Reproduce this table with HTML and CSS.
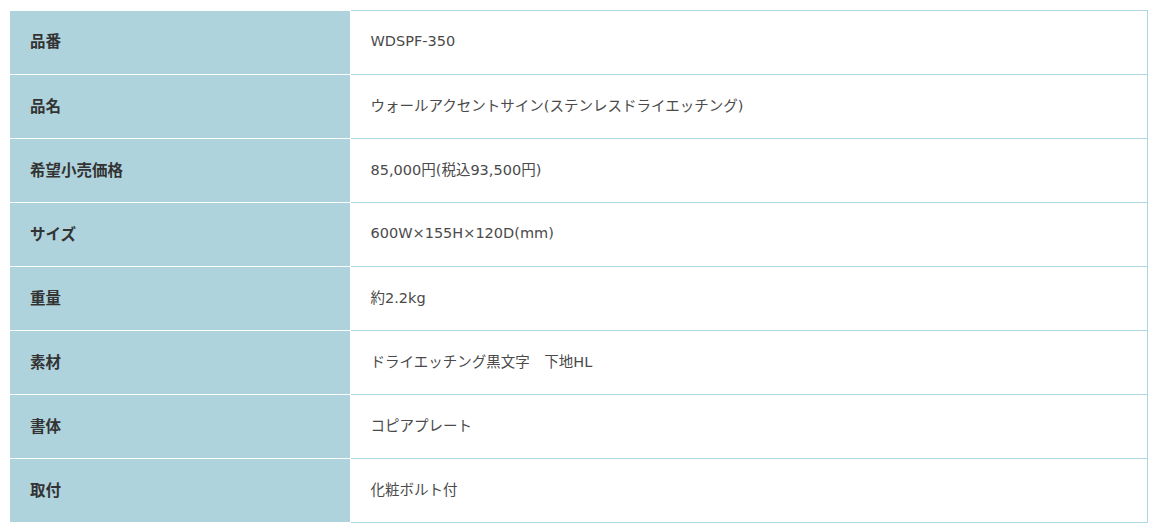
FILE: index.html
```html
<!DOCTYPE html>
<html lang="ja">
<head>
<meta charset="utf-8">
<link rel="stylesheet" href="styles.css">
</head>
<body>
<table class="spec">
<tbody>
<tr><th>品番</th><td>WDSPF-350</td></tr>
<tr><th>品名</th><td>ウォールアクセントサイン(ステンレスドライエッチング)</td></tr>
<tr><th>希望小売価格</th><td>85,000円(税込93,500円)</td></tr>
<tr><th>サイズ</th><td>600W×155H×120D(mm)</td></tr>
<tr><th>重量</th><td>約2.2kg</td></tr>
<tr><th>素材</th><td>ドライエッチング黒文字　下地HL</td></tr>
<tr><th>書体</th><td>コピアプレート</td></tr>
<tr><th>取付</th><td>化粧ボルト付</td></tr>
</tbody>
</table>
</body>
</html>
```
FILE: styles.css
```css
html, body {
  margin: 0;
  padding: 0;
  background: #fff;
}
body {
  padding: 10px 5px 0 10px;
  font-family: "Noto Sans CJK JP", "Noto Sans", sans-serif;
}
.spec {
  width: 1138px;
  border-collapse: collapse;
  table-layout: fixed;
}
.spec th {
  width: 340px;
  height: 64px;
  box-sizing: border-box;
  background: #afd3dd;
  color: #333;
  font-family: "Noto Sans CJK JP", sans-serif;
  font-size: 15.5px;
  font-weight: bold;
  text-align: left;
  padding: 0 20px 4px;
  border-bottom: 1px solid #fff;
  border-right: 1px solid #fff;
}
.spec td {
  height: 64px;
  box-sizing: border-box;
  color: #4a4a4a;
  font-family: "DejaVu Sans", "Noto Sans CJK JP", sans-serif;
  font-size: 14.5px;
  padding: 0 20px 4px;
  border: 1px solid #acd6e0;
  border-left: none;
}
```
